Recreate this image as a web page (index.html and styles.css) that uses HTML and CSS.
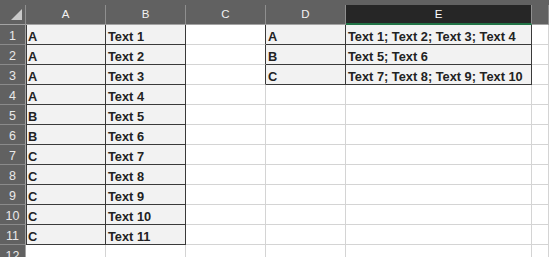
FILE: index.html
```html
<!DOCTYPE html>
<html>
<head>
<meta charset="utf-8">
<link rel="stylesheet" href="styles.css">
</head>
<body>
<div class="sheet">
  <div class="strip"></div>

  <div class="ch corner"><svg class="tri" width="26" height="19" viewBox="0 0 26 19"><polygon points="22,4 22,15 11,15" fill="#c9c9c9"/></svg></div>
  <div class="ch">A</div>
  <div class="ch">B</div>
  <div class="ch">C</div>
  <div class="ch">D</div>
  <div class="ch sel">E</div>
  <div class="ch"></div>

  <div class="rh">1</div><div class="c d da">A</div><div class="c d">Text 1</div><div class="c dr"></div><div class="c d">A</div><div class="c d">Text 1; Text 2; Text 3; Text 4</div><div class="c"></div>
  <div class="rh">2</div><div class="c d da">A</div><div class="c d">Text 2</div><div class="c dr"></div><div class="c d">B</div><div class="c d">Text 5; Text 6</div><div class="c"></div>
  <div class="rh">3</div><div class="c d da">A</div><div class="c d">Text 3</div><div class="c dr"></div><div class="c d">C</div><div class="c d">Text 7; Text 8; Text 9; Text 10</div><div class="c"></div>
  <div class="rh">4</div><div class="c d da">A</div><div class="c d">Text 4</div><div class="c"></div><div class="c"></div><div class="c"></div><div class="c"></div>
  <div class="rh">5</div><div class="c d da">B</div><div class="c d">Text 5</div><div class="c"></div><div class="c"></div><div class="c"></div><div class="c"></div>
  <div class="rh">6</div><div class="c d da">B</div><div class="c d">Text 6</div><div class="c"></div><div class="c"></div><div class="c"></div><div class="c"></div>
  <div class="rh">7</div><div class="c d da">C</div><div class="c d">Text 7</div><div class="c"></div><div class="c"></div><div class="c"></div><div class="c"></div>
  <div class="rh">8</div><div class="c d da">C</div><div class="c d">Text 8</div><div class="c"></div><div class="c"></div><div class="c"></div><div class="c"></div>
  <div class="rh">9</div><div class="c d da">C</div><div class="c d">Text 9</div><div class="c"></div><div class="c"></div><div class="c"></div><div class="c"></div>
  <div class="rh">10</div><div class="c d da">C</div><div class="c d">Text 10</div><div class="c"></div><div class="c"></div><div class="c"></div><div class="c"></div>
  <div class="rh">11</div><div class="c d da">C</div><div class="c d">Text 11</div><div class="c"></div><div class="c"></div><div class="c"></div><div class="c"></div>
  <div class="rh">12</div><div class="c"></div><div class="c"></div><div class="c"></div><div class="c"></div><div class="c"></div><div class="c"></div>
</div>
</body>
</html>
```

FILE: styles.css
```css
html, body {
  margin: 0;
  padding: 0;
  background: #ffffff;
  overflow: hidden;
}

.sheet {
  display: grid;
  grid-template-columns: 26px 80px 80px 80px 80px 186px 1fr;
  grid-template-rows: 5px 20px repeat(12, 20px);
  width: 549px;
  height: 257px;
  overflow: hidden;
  font-family: "Liberation Sans", Arial, sans-serif;
}

.strip {
  grid-column: 1 / -1;
  background: #616161;
}

.ch {
  box-sizing: border-box;
  background: #616161;
  color: #f2f2f2;
  font-size: 11.5px;
  line-height: 19px;
  text-align: center;
  border-right: 1px solid #8f8f8f;
  border-bottom: 1px solid #a3a3a3;
}

.ch.corner {
  position: relative;
}

.tri {
  display: block;
}

.ch.sel {
  background: #262626;
  color: #ffffff;
  border-bottom: 2px solid #217346;
  line-height: 18px;
}

.rh {
  box-sizing: border-box;
  background: #616161;
  color: #e9e9e9;
  font-size: 12.5px;
  line-height: 15px;
  text-align: center;
  border-right: 1px solid #a3a3a3;
  border-bottom: 1px solid #8a8a8a;
  display: flex;
  align-items: flex-end;
  justify-content: center;
}

.c {
  box-sizing: border-box;
  border-right: 1px solid #d4d4d4;
  border-bottom: 1px solid #d4d4d4;
  background: #ffffff;
}

.d {
  background: #f2f2f2;
  color: #222222;
  font-weight: bold;
  font-size: 12.8px;
  line-height: 15px;
  padding-left: 2px;
  display: flex;
  align-items: flex-end;
  white-space: nowrap;
  border-right-color: #3a3a3a;
  border-bottom-color: #3a3a3a;
}

.da {
  box-shadow: inset 1px 0 0 #3a3a3a;
}

.dr {
  border-right-color: #3a3a3a;
}
```
